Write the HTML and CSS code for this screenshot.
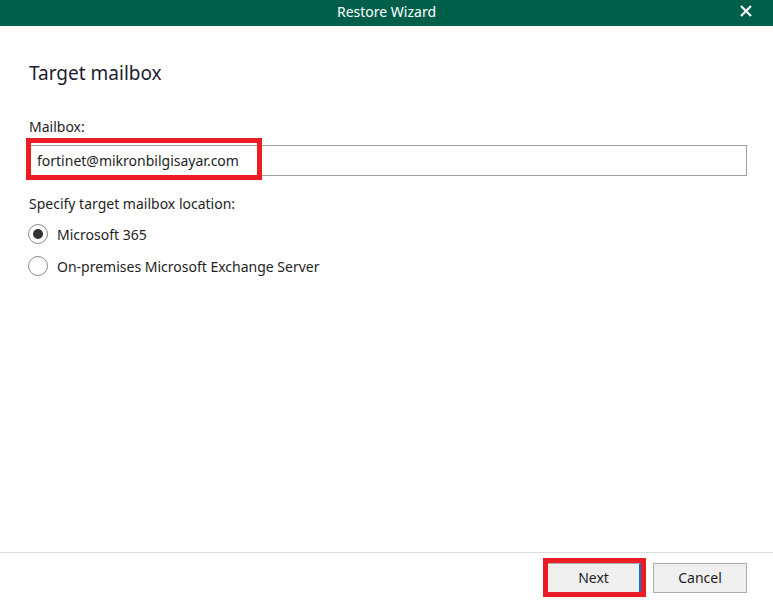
FILE: index.html
```html
<!DOCTYPE html>
<html>

<head>
    <meta charset="UTF-8">
    <meta name="viewport" content="width=device-width, initial-scale=1.0">
    <link rel="stylesheet" href="styles.css">
    <title>Restore Wizard</title>
</head>

<body>
    <div class="wizard">
        <div class="titlebar">
            <span class="title">Restore Wizard</span>
            <span class="close">
                <svg width="12" height="12" viewBox="0 0 12 12">
                    <path d="M1 1 L11 11 M11 1 L1 11" stroke="#fff" stroke-width="2.2" fill="none" />
                </svg>
            </span>
        </div>
        <div class="content">
            <h1>Target mailbox</h1>
            <label class="label">Mailbox:</label>
            <div class="field">
                <div class="textbox">fortinet@mikronbilgisayar.com</div>
                <span class="mark mark-input"></span>
            </div>
            <div class="label label-loc">Specify target mailbox location:</div>
            <div class="radios">
                <div class="radio-row">
                    <span class="radio checked"></span>
                    <span>Microsoft 365</span>
                </div>
                <div class="radio-row">
                    <span class="radio"></span>
                    <span>On-premises Microsoft Exchange Server</span>
                </div>
            </div>
        </div>
        <div class="footer">
            <div class="btn-wrap">
                <button class="btn btn-focus">Next</button>
                <span class="mark mark-btn"></span>
            </div>
            <button class="btn">Cancel</button>
        </div>
    </div>
</body>

</html>
```

FILE: styles.css
```css
body {
    margin: 0;
    padding: 0;
    font-family: 'Noto Sans', 'Open Sans', sans-serif;
    font-size: 14px;
    color: #1e1e1e;
    background-color: #ffffff;
}

.wizard {
    display: flex;
    flex-direction: column;
    height: 600px;
    width: 773px;
}

.titlebar {
    height: 26px;
    background-color: #005f4b;
    color: #ffffff;
    display: flex;
    align-items: center;
    justify-content: center;
    position: relative;
}

.title {
    font-size: 14px;
    margin-top: -4px;
}

.close {
    position: absolute;
    right: 21px;
    top: 2px;
}

.content {
    flex: 1;
    padding: 0 26px 0 28px;
}

h1 {
    font-size: 19px;
    font-weight: normal;
    color: #1c1c30;
    margin: 34px 0 0 1px;
    line-height: 26px;
}

.label {
    display: block;
    margin: 31px 0 0 1px;
    line-height: 20px;
}

.field {
    position: relative;
    margin-top: 8px;
}

.textbox {
    height: 29px;
    border: 1px solid #a0a0a0;
    line-height: 29px;
    padding-left: 8px;
}

.mark {
    position: absolute;
    border: 5px solid #ec1c24;
}

.mark-input {
    left: -2px;
    top: -7px;
    width: 226px;
    height: 32px;
}

.label-loc {
    margin-top: 18px;
}

.radios {
    margin-top: 4px;
}

.radio-row {
    display: flex;
    align-items: center;
    gap: 9px;
    height: 32px;
}

.radio {
    width: 20px;
    height: 20px;
    border: 1px solid #8a8a8a;
    border-radius: 50%;
    box-sizing: border-box;
    display: flex;
    align-items: center;
    justify-content: center;
}

.radio.checked::after {
    content: '';
    width: 10px;
    height: 10px;
    border-radius: 50%;
    background-color: #333333;
}

.footer {
    height: 48px;
    border-top: 1px solid #dcdcdc;
    display: flex;
    justify-content: flex-end;
    align-items: center;
    gap: 12px;
    padding: 2px 26px 0 0;
    box-sizing: border-box;
}

.btn-wrap {
    position: relative;
    display: flex;
}

.btn {
    width: 94px;
    height: 30px;
    background-color: #efefef;
    border: 1px solid #adadad;
    font-family: 'Noto Sans', 'Open Sans', sans-serif;
    font-size: 14px;
    color: #1e1e1e;
    padding: 0;
}

.btn-focus {
    border-right: 2px solid #0078d7;
}

.mark-btn {
    left: -4px;
    top: -5px;
    width: 93px;
    height: 29px;
}
```
